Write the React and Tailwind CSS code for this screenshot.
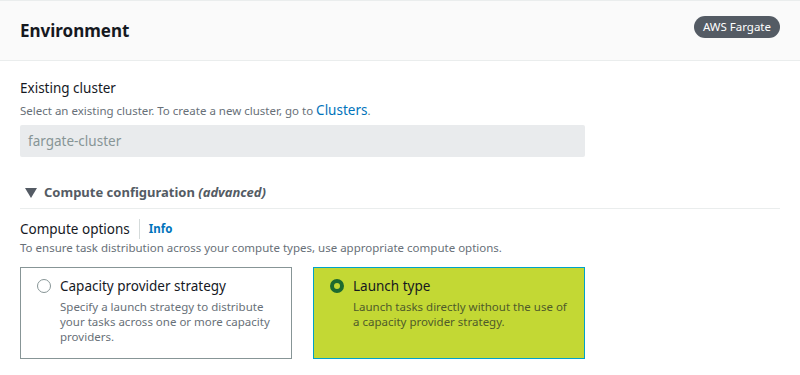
import React from 'react';

const font = { fontFamily: '"Noto Sans", "Open Sans", sans-serif' };

const Radio = ({ checked }) =>
    checked ? (
        <span className="mt-[3px] w-[14px] h-[14px] rounded-full border-[4px] border-[#1d6a2f] bg-[#c3d733] shrink-0" />
    ) : (
        <span className="mt-[3px] w-[14px] h-[14px] rounded-full border border-[#879596] bg-white shrink-0" />
    );

const OptionCard = ({ title, description, checked }) => (
    <div
        className={`w-[272px] h-[92px] pl-[16px] pr-[12px] pt-[8px] border ${
            checked ? 'bg-[#c3d834] border-[#00a1c9]' : 'bg-white border-[#879596]'
        }`}
    >
        <div className="flex gap-[9px]">
            <Radio checked={checked} />
            <div>
                <div className="text-[13.5px] leading-[20px] text-[#16191f]">{title}</div>
                <div className={`mt-[3px] text-[11.5px] leading-[15px] ${checked ? 'text-[#4f5b2a]' : 'text-[#687078]'}`}>{description}</div>
            </div>
        </div>
    </div>
);

const App = () => {
    return (
        <div className="w-[800px] h-[375px] bg-white overflow-hidden" style={font}>
            {/* Header */}
            <div className="h-[61px] bg-[#fafafa] border-t border-b border-[#eaeded] flex items-center justify-between pl-[20px] pr-[20px]">
                <h2 className="text-[17px] font-bold text-[#16191f] mt-[1px]">Environment</h2>
                <span className="h-[22px] px-[9px] rounded-full bg-[#545b64] text-white text-[11.5px] leading-[22px] -mt-[8px]">AWS Fargate</span>
            </div>

            <div className="px-[20px]">
                {/* Existing cluster */}
                <div className="pt-[17px]">
                    <div className="text-[13.5px] leading-[20px] text-[#16191f]">Existing cluster</div>
                    <div className="text-[11.5px] leading-[20px] text-[#687078] mt-[2px]">
                        Select an existing cluster. To create a new cluster, go to{' '}
                        <span className="text-[13.5px] text-[#0073bb]">Clusters</span>.
                    </div>
                    <div className="mt-[4px] w-[565px] h-[32px] bg-[#e9ebed] rounded-[2px] px-[8px] flex items-center text-[13.5px] text-[#879596]">
                        fargate-cluster
                    </div>
                </div>

                {/* Compute configuration */}
                <div className="mt-[26px] pb-[5px] border-b border-[#eaeded] flex items-center gap-[7px]">
                    <svg width="12" height="10" viewBox="0 0 12 10" className="ml-[5px]">
                        <path d="M0 0 L12 0 L6 10 Z" fill="#545b64" />
                    </svg>
                    <span className="text-[13px] font-bold text-[#545b64]">
                        Compute configuration <span className="italic">(advanced)</span>
                    </span>
                </div>

                <div className="mt-[10px] flex items-center">
                    <span className="text-[13.5px] leading-[20px] text-[#16191f] pr-[9px] border-r border-[#d5dbdb]">Compute options</span>
                    <span className="text-[11.5px] font-bold text-[#0073bb] pl-[9px]">Info</span>
                </div>
                <div className="text-[11.5px] leading-[16px] text-[#687078] mt-[1px]">
                    To ensure task distribution across your compute types, use appropriate compute options.
                </div>

                <div className="mt-[11px] flex gap-[21px]">
                    <OptionCard
                        title="Capacity provider strategy"
                        description="Specify a launch strategy to distribute your tasks across one or more capacity providers."
                    />
                    <OptionCard
                        checked
                        title="Launch type"
                        description="Launch tasks directly without the use of a capacity provider strategy."
                    />
                </div>
            </div>
        </div>
    );
};

export default App;
